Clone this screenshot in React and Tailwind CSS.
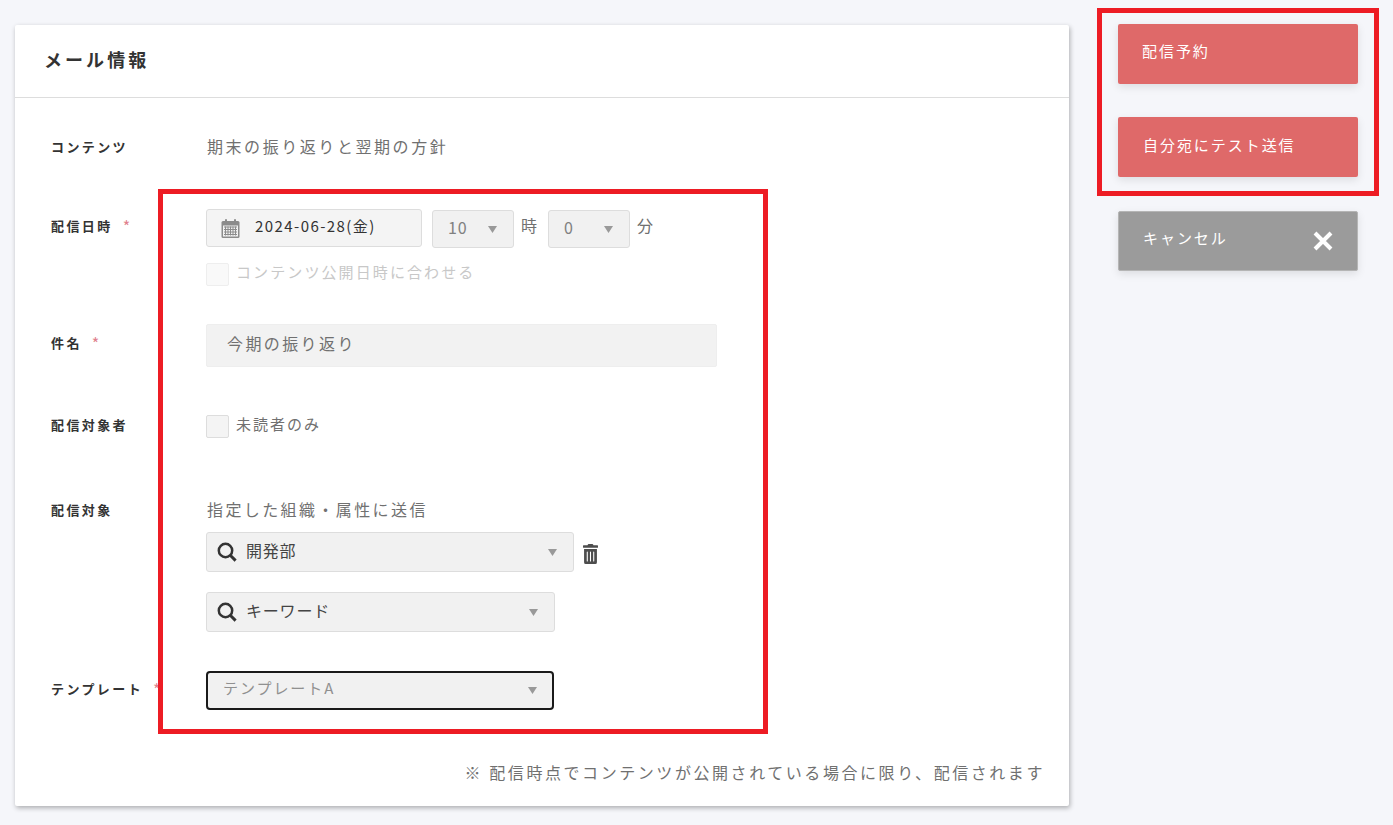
import { FaTrashAlt } from 'react-icons/fa';

const font = "font-['Noto_Sans_CJK_JP','Noto_Sans',sans-serif]";

function Caret({ className = '' }) {
  return (
    <svg width="9" height="7" viewBox="0 0 9 7" className={className}>
      <path d="M0 0h9L4.5 7z" fill="#999999" />
    </svg>
  );
}

function SearchIcon() {
  return (
    <svg width="20" height="20" viewBox="0 0 20 20" fill="none" stroke="#333333" className="shrink-0">
      <circle cx="8.5" cy="8.5" r="6.7" strokeWidth="2.5" />
      <path d="M13.5 13.5L18.6 18.6" strokeWidth="3" />
    </svg>
  );
}

function CalendarIcon() {
  return (
    <svg width="19" height="19" viewBox="0 0 19 19" className="shrink-0">
      <rect x="0.5" y="2" width="18" height="17" rx="1.5" fill="#8c8c8c" />
      <rect x="2" y="6.5" width="15" height="11" fill="#f2f2f2" />
      <rect x="4" y="0" width="2" height="4.5" rx="1" fill="#8c8c8c" />
      <rect x="13" y="0" width="2" height="4.5" rx="1" fill="#8c8c8c" />
      <path
        d="M3 8h13M3 10.5h13M3 13h13M3 15.5h13M4.5 7.5v9M7 7.5v9M9.5 7.5v9M12 7.5v9M14.5 7.5v9"
        stroke="#8c8c8c"
        strokeWidth="1"
      />
    </svg>
  );
}

function Label({ text, required, top }) {
  return (
    <div className={`w-[155px] shrink-0 flex text-[13px] leading-5 font-bold tracking-[0.185em] text-[#333333] ${top}`}>
      <span>{text}</span>
      {required && <span className="ml-[10px] text-[16px] text-[#e0808c] font-normal">*</span>}
    </div>
  );
}

function SmallSelect({ value }) {
  return (
    <div className="w-[82px] h-[38px] mt-px flex items-center justify-between pl-[15px] pr-4 bg-[#f1f1f1] border border-[#dddddd] rounded-[3px] text-[16px] tracking-[0.05em] text-[#808080]">
      <span className="pb-1">{value}</span>
      <Caret />
    </div>
  );
}

function SearchSelect({ text, width, className = '' }) {
  return (
    <div className={`${width} h-10 flex items-center pl-[10px] pr-4 bg-[#f1f1f1] border border-[#dddddd] rounded-[3px] ${className}`}>
      <SearchIcon />
      <span className="ml-[9px] pb-1 text-[16px] tracking-[0.05em] text-[#444444]">{text}</span>
      <Caret className="ml-auto" />
    </div>
  );
}

function SideButton({ text, mt, textClass, children, gray }) {
  return (
    <div
      className={`w-[240px] h-[60px] flex items-center justify-between rounded-[2px] shadow-[0_3px_8px_rgba(0,0,0,0.1)] text-[15px] tracking-[0.13em] text-white ${mt} ${
        gray ? 'bg-[#9b9b9b] border border-[#b5b5b5]' : 'bg-[#df6969]'
      }`}
    >
      <span className={textClass}>{text}</span>
      {children}
    </div>
  );
}

export default function App() {
  return (
    <div className={`relative w-[1393px] h-[825px] overflow-hidden flex items-start bg-[#f5f6fa] ${font}`}>
      <div className="ml-[15px] mt-[25px] w-[1054px] h-[781px] shrink-0 bg-white rounded-[2px] shadow-[1px_2px_5px_rgba(0,0,0,0.3)]">
        <div className="h-[73px] flex items-center pl-[29px] pb-1 border-b border-[#dddddd]">
          <h1 className="text-[18px] font-bold tracking-[0.17em] text-[#333333]">メール情報</h1>
        </div>

        <div className="pl-9 pr-6 text-[#707070]">
          <div className="flex pt-9">
            <Label text="コンテンツ" top="pt-[3px]" />
            <div className="ml-px text-[16px] leading-6 tracking-[0.16em]">期末の振り返りと翌期の方針</div>
          </div>

          <div className="flex mt-[51px]">
            <Label text="配信日時" required top="pt-[7px]" />
            <div>
              <div className="flex items-start">
                <div className="w-[216px] h-[38px] flex items-center pl-[14px] bg-[#f4f4f4] border border-[#dddddd] rounded-[3px]">
                  <CalendarIcon />
                  <span className="ml-[15px] pb-[3px] text-[15px] tracking-[0.095em] text-[#333333]">2024-06-28(金)</span>
                </div>
                <div className="ml-[10px]"><SmallSelect value="10" /></div>
                <span className="ml-[7px] mr-[11px] mt-1 text-[16px] leading-6 text-[#707070]">時</span>
                <SmallSelect value="0" />
                <span className="ml-[7px] mt-1 text-[16px] leading-6 text-[#707070]">分</span>
              </div>
              <div className="flex items-center mt-[15px]">
                <div className="w-[23px] h-[23px] bg-[#f9f9f9] border border-[#eeeeee] rounded-[2px]" />
                <span className="ml-[7px] pb-[5px] leading-[18px] text-[15px] tracking-[0.14em] text-[#c8c8c8]">コンテンツ公開日時に合わせる</span>
              </div>
            </div>
          </div>

          <div className="flex mt-[38px]">
            <Label text="件名" required top="pt-[9px]" />
            <div className="w-[511px] h-[43px] flex items-center pl-5 pb-[5px] bg-[#f2f2f2] border border-[#eeeeee] rounded-[2px] text-[16px] tracking-[0.15em] text-[#707070]">
              今期の振り返り
            </div>
          </div>

          <div className="flex mt-[48px]">
            <Label text="配信対象者" top="" />
            <div className="flex items-center">
              <div className="w-[23px] h-[23px] bg-[#f4f4f4] border border-[#dddddd] rounded-[2px]" />
              <span className="ml-[7px] pb-[5px] leading-[18px] text-[15px] tracking-[0.135em] text-[#707070]">未読者のみ</span>
            </div>
          </div>

          <div className="flex mt-[59px]">
            <Label text="配信対象" top="pt-[3px]" />
            <div>
              <div className="ml-px text-[16px] leading-6 tracking-[0.15em] text-[#707070]">指定した組織・属性に送信</div>
              <div className="flex items-center mt-[11px]">
                <SearchSelect text="開発部" width="w-[368px]" />
                <FaTrashAlt preserveAspectRatio="none" className="ml-[9px] mt-[3px] text-[#4d4d4d] w-[15px] h-5" />
              </div>
              <SearchSelect text="キーワード" width="w-[349px]" className="mt-5" />
            </div>
          </div>

          <div className="flex mt-[39px]">
            <Label text="テンプレート" required top="pt-2" />
            <div className="w-[348px] h-[39px] flex items-center justify-between px-[15px] bg-[#f1f1f1] border-2 border-[#1a1a1a] rounded-[4px] text-[15px] tracking-[0.13em] text-[#909090]">
              <span className="pb-1">テンプレートA</span>
              <Caret />
            </div>
          </div>

          <div className="mt-[50px] text-right text-[16px] leading-6 tracking-[0.16em] text-[#707070]">
            ※ 配信時点でコンテンツが公開されている場合に限り、配信されます
          </div>
        </div>
      </div>

      <div className="ml-[49px] pt-6 shrink-0">
        <SideButton text="配信予約" textClass="ml-6 -mt-[6px]" />
        <SideButton text="自分宛にテスト送信" mt="mt-[33px]" textClass="ml-[25px] -mt-[4px]" />
        <SideButton text="キャンセル" mt="mt-[34px]" textClass="ml-6 -mt-[6px]" gray>
          <svg width="20" height="20" viewBox="0 0 20 20" className="mr-6" stroke="white" strokeWidth="4">
            <path d="M2 2l16 16M18 2L2 18" />
          </svg>
        </SideButton>
      </div>

      {/* red annotation boxes drawn over the screenshot */}
      <div className="absolute left-[158px] top-[189px] w-[610px] h-[545px] border-[5px] border-[#ed1c24] pointer-events-none" />
      <div className="absolute left-[1097px] top-[8px] w-[282px] h-[188px] border-[5px] border-[#ed1c24] pointer-events-none" />
    </div>
  );
}
